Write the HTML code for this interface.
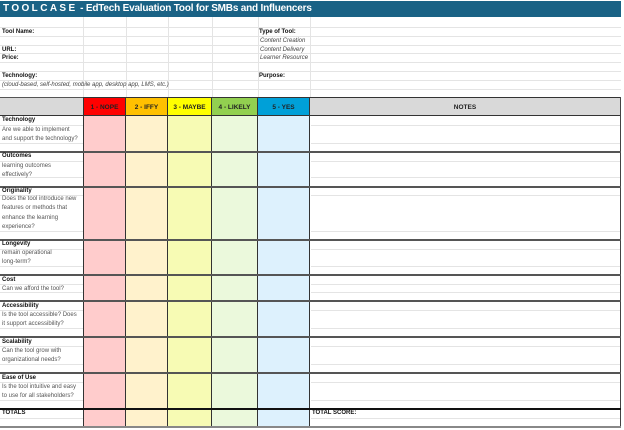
<!DOCTYPE html>
<html><head><meta charset="utf-8"><style>
*{margin:0;padding:0;box-sizing:border-box}
body{width:624px;height:430px;background:#fff;position:relative;overflow:hidden;font-family:"Liberation Sans",sans-serif;color:#222}
.a{position:absolute}
.t{position:absolute;font-size:6px;line-height:8px;white-space:nowrap}
.b{font-weight:bold;color:#111}
.i{font-style:italic;color:#444}
.g{color:#555}
.hl{position:absolute;height:1px;background:#e4e4e4}
.vl{position:absolute;width:1px;background:#e4e4e4}
.hdr{position:absolute;top:97px;height:19px;font-size:6.5px;font-weight:bold;text-align:center;line-height:19px;border:1px solid #333;border-width:1px 1px 1px 0}
</style></head><body>
<div class="a" style="left:0;top:1px;width:621px;height:16px;background:#1a6285"></div>
<div class="a" style="left:3px;top:1px;height:16px;line-height:16px;color:#fff;font-weight:bold;font-size:10px;white-space:nowrap;letter-spacing:-0.2px"><span style="letter-spacing:2.4px">TOOLCASE</span> - EdTech Evaluation Tool for SMBs and Influencers</div>

<div class="hl" style="left:0;top:27px;width:621px"></div>
<div class="hl" style="left:0;top:36px;width:621px"></div>
<div class="hl" style="left:0;top:45px;width:621px"></div>
<div class="hl" style="left:0;top:53px;width:621px"></div>
<div class="hl" style="left:0;top:62px;width:621px"></div>
<div class="hl" style="left:0;top:71px;width:621px"></div>
<div class="hl" style="left:0;top:80px;width:621px"></div>
<div class="hl" style="left:0;top:89px;width:621px"></div>
<div class="vl" style="left:83px;top:17px;height:80px"></div>
<div class="vl" style="left:126px;top:17px;height:80px"></div>
<div class="vl" style="left:168px;top:17px;height:80px"></div>
<div class="vl" style="left:212px;top:17px;height:80px"></div>
<div class="vl" style="left:258px;top:17px;height:80px"></div>
<div class="vl" style="left:310px;top:17px;height:80px"></div>

<div class="t b" style="left:2px;top:28px">Tool Name:</div>
<div class="t b" style="left:2px;top:46px">URL:</div>
<div class="t b" style="left:2px;top:54px">Price:</div>
<div class="t b" style="left:2px;top:72px">Technology:</div>
<div class="t i" style="left:2px;top:81px">(cloud-based, self-hosted, mobile app, desktop app, LMS, etc.)</div>
<div class="t b" style="left:259px;top:28px">Type of Tool:</div>
<div class="t i" style="left:260px;top:37px">Content Creation</div>
<div class="t i" style="left:260px;top:46px">Content Delivery</div>
<div class="t i" style="left:260px;top:54px">Learner Resource</div>
<div class="t b" style="left:259px;top:72px">Purpose:</div>

<div class="a" style="left:0;top:97px;width:621px;height:19px;background:#d9d9d9;border-top:1px solid #555;border-bottom:1px solid #333"></div>
<div class="hdr" style="left:83px;width:43px;background:#ff0000;border-left-width:1px">1 - NOPE</div>
<div class="hdr" style="left:126px;width:42px;background:#ffc000">2 - IFFY</div>
<div class="hdr" style="left:168px;width:44px;background:#ffff00">3 - MAYBE</div>
<div class="hdr" style="left:212px;width:46px;background:#92d050">4 - LIKELY</div>
<div class="hdr" style="left:258px;width:52px;background:#00a0d8">5 - YES</div>
<div class="hdr" style="left:310px;width:311px;background:#d9d9d9">NOTES</div>

<div class="a" style="left:83px;top:116px;width:43px;height:311px;background:#ffcccc;border-left:1px solid #333;border-right:1px solid #333"></div>
<div class="a" style="left:126px;top:116px;width:42px;height:311px;background:#fff2cc;border-right:1px solid #333"></div>
<div class="a" style="left:168px;top:116px;width:44px;height:311px;background:#f7fbb4;border-right:1px solid #333"></div>
<div class="a" style="left:212px;top:116px;width:46px;height:311px;background:#ebf9dc;border-right:1px solid #333"></div>
<div class="a" style="left:258px;top:116px;width:52px;height:311px;background:#ddf1fd;border-right:1px solid #333"></div>
<div class="a" style="left:620px;top:97px;width:1px;height:330px;background:#444"></div>

<div class="hl" style="left:0;top:125px;width:83px"></div><div class="hl" style="left:311px;top:125px;width:309px"></div>
<div class="hl" style="left:0;top:143px;width:83px"></div><div class="hl" style="left:311px;top:143px;width:309px"></div>
<div class="hl" style="left:0;top:161px;width:83px"></div><div class="hl" style="left:311px;top:161px;width:309px"></div>
<div class="hl" style="left:0;top:177px;width:83px"></div><div class="hl" style="left:311px;top:177px;width:309px"></div>
<div class="hl" style="left:0;top:195px;width:83px"></div><div class="hl" style="left:311px;top:195px;width:309px"></div>
<div class="hl" style="left:0;top:231px;width:83px"></div><div class="hl" style="left:311px;top:231px;width:309px"></div>
<div class="hl" style="left:0;top:249px;width:83px"></div><div class="hl" style="left:311px;top:249px;width:309px"></div>
<div class="hl" style="left:0;top:266px;width:83px"></div><div class="hl" style="left:311px;top:266px;width:309px"></div>
<div class="hl" style="left:0;top:284px;width:83px"></div><div class="hl" style="left:311px;top:284px;width:309px"></div>
<div class="hl" style="left:0;top:292px;width:83px"></div><div class="hl" style="left:311px;top:292px;width:309px"></div>
<div class="hl" style="left:0;top:310px;width:83px"></div><div class="hl" style="left:311px;top:310px;width:309px"></div>
<div class="hl" style="left:0;top:328px;width:83px"></div><div class="hl" style="left:311px;top:328px;width:309px"></div>
<div class="hl" style="left:0;top:346px;width:83px"></div><div class="hl" style="left:311px;top:346px;width:309px"></div>
<div class="hl" style="left:0;top:364px;width:83px"></div><div class="hl" style="left:311px;top:364px;width:309px"></div>
<div class="hl" style="left:0;top:382px;width:83px"></div><div class="hl" style="left:311px;top:382px;width:309px"></div>
<div class="hl" style="left:0;top:400px;width:83px"></div><div class="hl" style="left:311px;top:400px;width:309px"></div>
<div class="hl" style="left:0;top:418px;width:83px"></div><div class="hl" style="left:311px;top:418px;width:309px"></div>

<div class="a" style="left:0;top:151px;width:621px;height:2px;background:#555"></div>
<div class="a" style="left:0;top:186px;width:621px;height:2px;background:#555"></div>
<div class="a" style="left:0;top:239px;width:621px;height:2px;background:#555"></div>
<div class="a" style="left:0;top:274px;width:621px;height:2px;background:#555"></div>
<div class="a" style="left:0;top:300px;width:621px;height:2px;background:#555"></div>
<div class="a" style="left:0;top:336px;width:621px;height:2px;background:#555"></div>
<div class="a" style="left:0;top:372px;width:621px;height:2px;background:#555"></div>
<div class="a" style="left:0;top:408px;width:621px;height:2px;background:#111"></div>
<div class="a" style="left:0;top:426px;width:621px;height:2px;background:#888"></div>

<div class="t b" style="left:2px;top:116px">Technology</div>
<div class="t g" style="left:2px;top:126px">Are we able to implement</div>
<div class="t g" style="left:2px;top:135px">and support the technology?</div>
<div class="t b" style="left:2px;top:152px">Outcomes</div>
<div class="t g" style="left:2px;top:162px">learning outcomes</div>
<div class="t g" style="left:2px;top:171px">effectively?</div>
<div class="t b" style="left:2px;top:187px">Originality</div>
<div class="t g" style="left:2px;top:195px">Does the tool introduce new</div>
<div class="t g" style="left:2px;top:204px">features or methods that</div>
<div class="t g" style="left:2px;top:214px">enhance the learning</div>
<div class="t g" style="left:2px;top:223px">experience?</div>
<div class="t b" style="left:2px;top:240px">Longevity</div>
<div class="t g" style="left:2px;top:249px">remain operational</div>
<div class="t g" style="left:2px;top:258px">long-term?</div>
<div class="t b" style="left:2px;top:276px">Cost</div>
<div class="t g" style="left:2px;top:285px">Can we afford the tool?</div>
<div class="t b" style="left:2px;top:302px">Accessibility</div>
<div class="t g" style="left:2px;top:311px">Is the tool accessible? Does</div>
<div class="t g" style="left:2px;top:320px">it support accessibility?</div>
<div class="t b" style="left:2px;top:338px">Scalability</div>
<div class="t g" style="left:2px;top:347px">Can the tool grow with</div>
<div class="t g" style="left:2px;top:356px">organizational needs?</div>
<div class="t b" style="left:2px;top:374px">Ease of Use</div>
<div class="t g" style="left:2px;top:383px">Is the tool intuitive and easy</div>
<div class="t g" style="left:2px;top:392px">to use for all stakeholders?</div>
<div class="t b" style="left:2px;top:409px">TOTALS</div>
<div class="t b" style="left:312px;top:409px">TOTAL SCORE:</div>
</body></html>
